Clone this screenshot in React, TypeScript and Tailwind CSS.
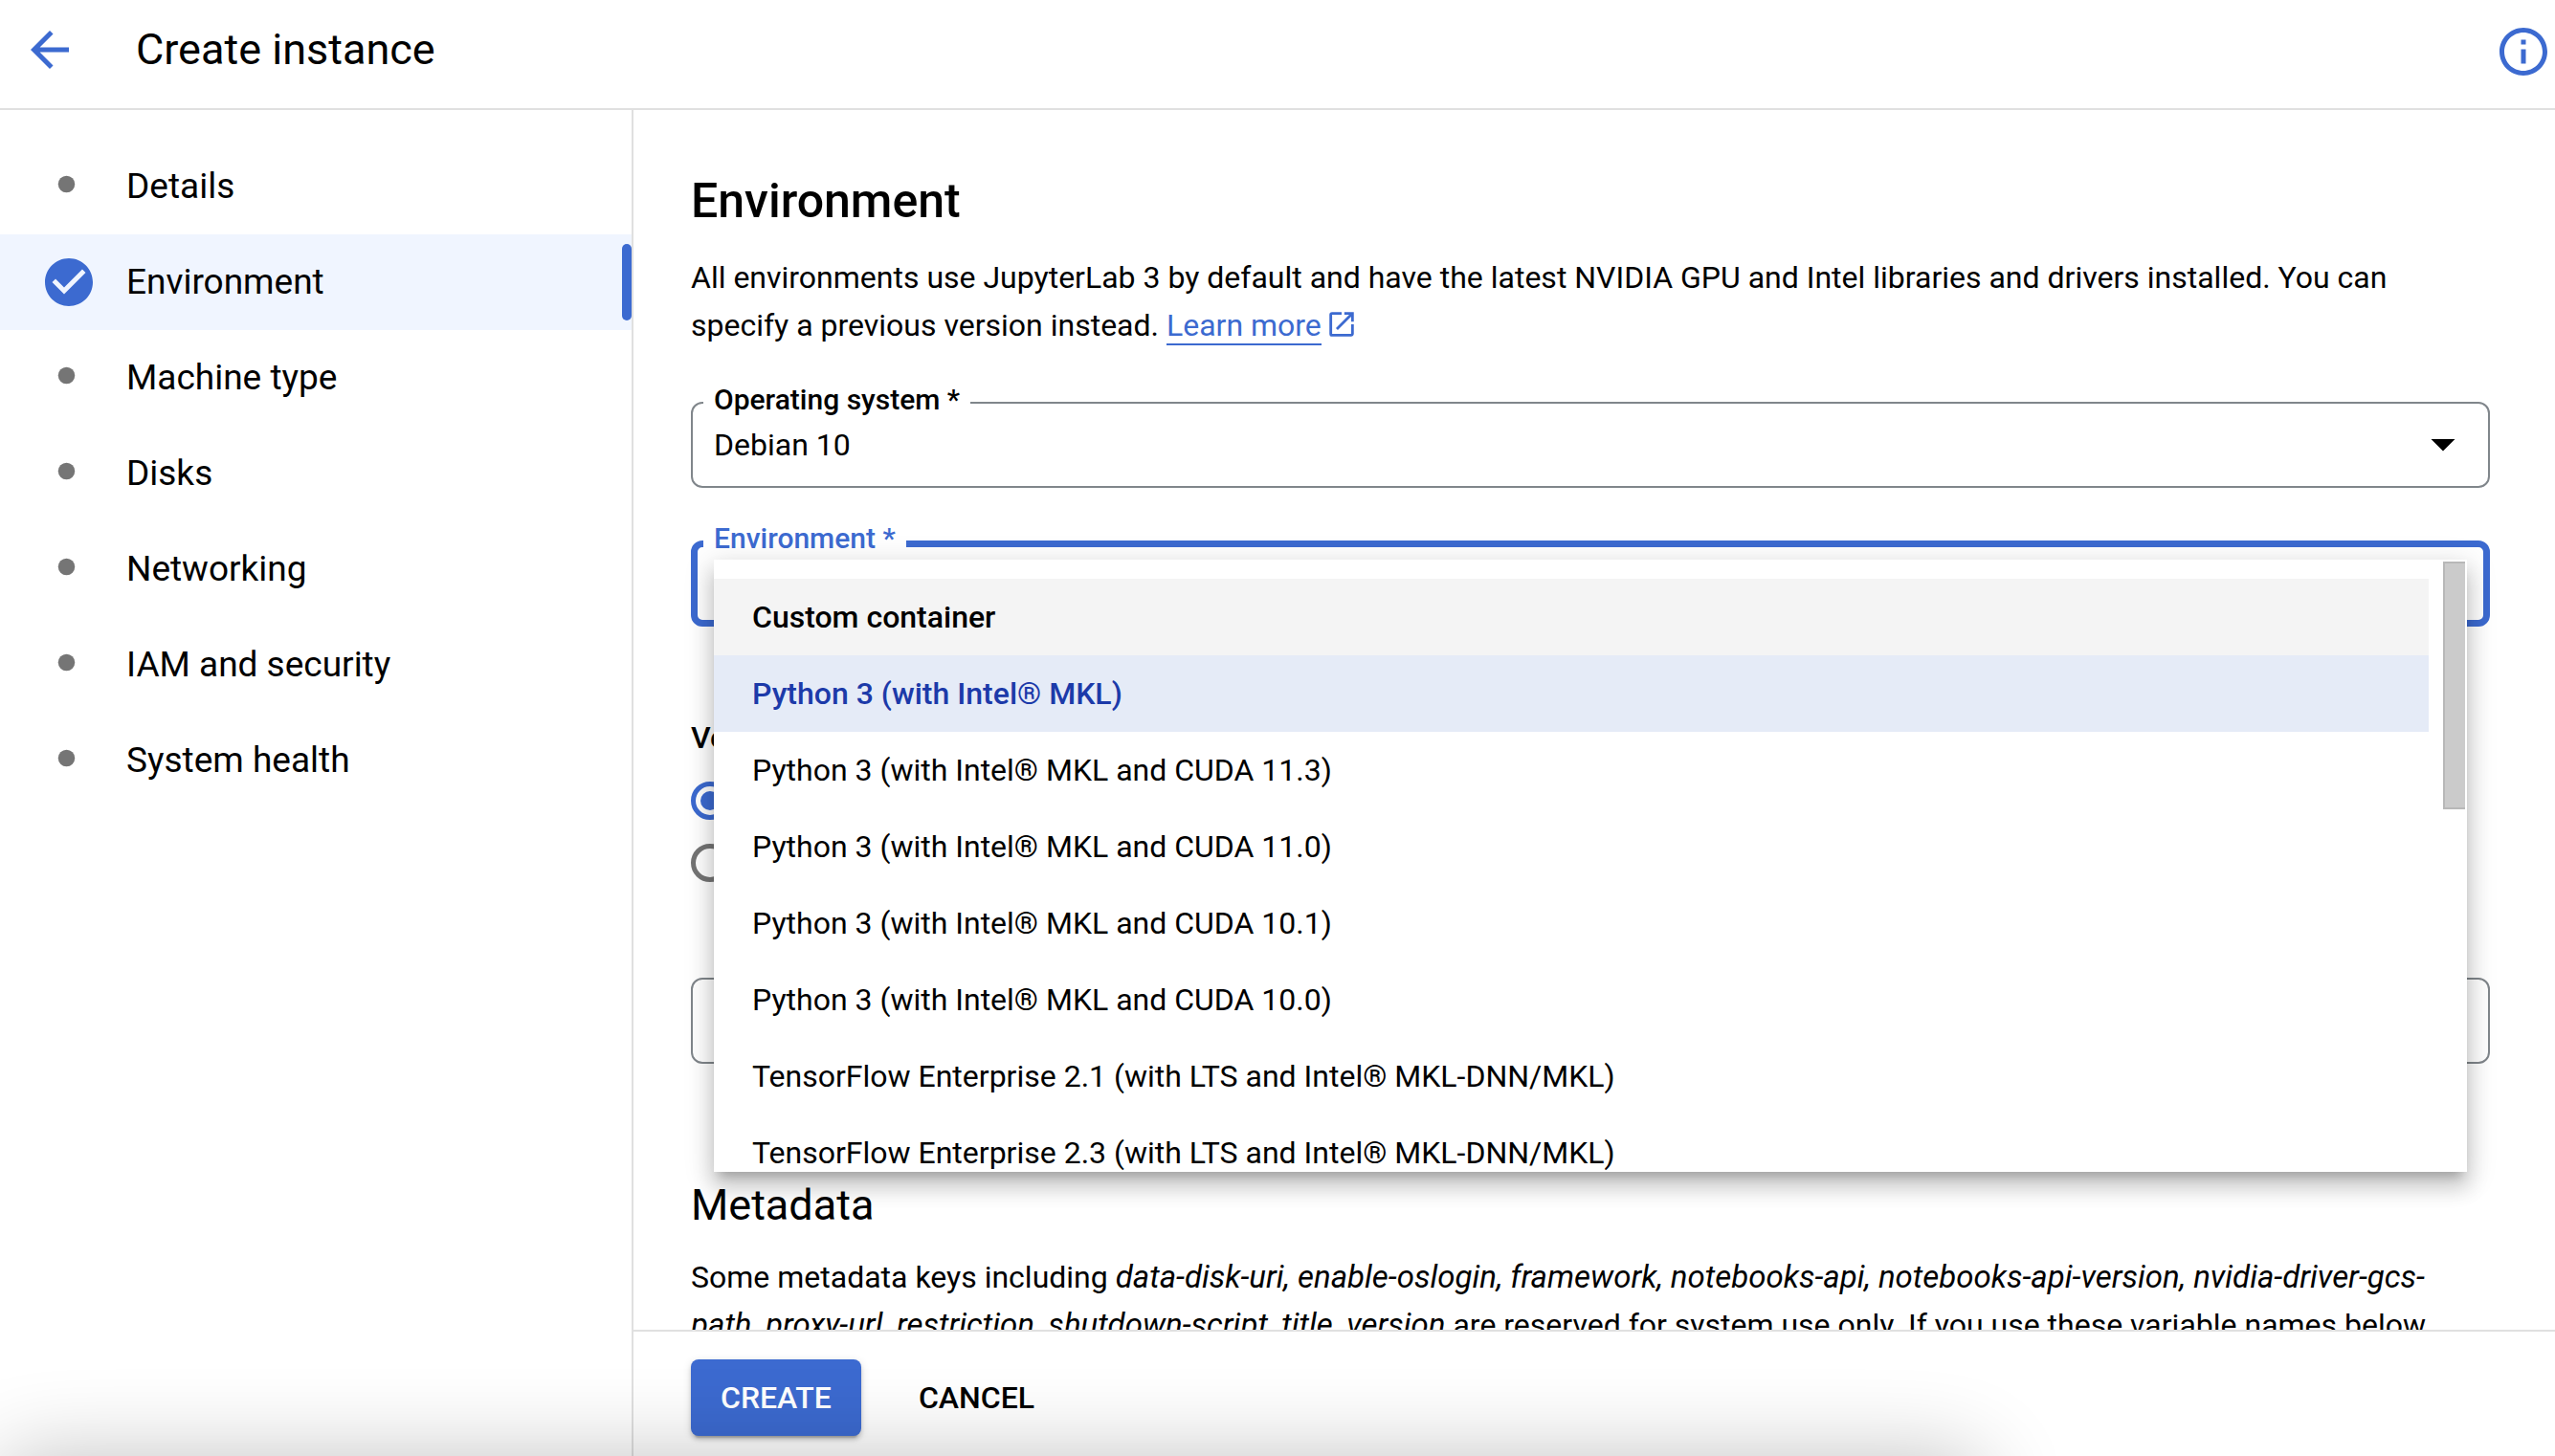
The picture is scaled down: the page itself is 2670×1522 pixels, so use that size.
import type { ReactNode } from "react";

const steps = [
  "Details",
  "Environment",
  "Machine type",
  "Disks",
  "Networking",
  "IAM and security",
  "System health",
];

const environments = [
  "Custom container",
  "Python 3 (with Intel® MKL)",
  "Python 3 (with Intel® MKL and CUDA 11.3)",
  "Python 3 (with Intel® MKL and CUDA 11.0)",
  "Python 3 (with Intel® MKL and CUDA 10.1)",
  "Python 3 (with Intel® MKL and CUDA 10.0)",
  "TensorFlow Enterprise 2.1 (with LTS and Intel® MKL-DNN/MKL)",
  "TensorFlow Enterprise 2.3 (with LTS and Intel® MKL-DNN/MKL)",
];

function Icon({ className, children }: { className: string; children: ReactNode }) {
  return (
    <svg viewBox="0 0 24 24" fill="currentColor" aria-hidden="true" className={className}>
      {children}
    </svg>
  );
}

function Header() {
  return (
    <header className="flex shrink-0 items-center border-b-2 border-[#e0e0e0] pb-[9px] pr-[3px] pl-[22px]">
      <button type="button" aria-label="Back" className="text-[#3c6ad0]">
        <Icon className="size-[60px]">
          <path d="M20 11H7.83l5.59-5.59L12 4l-8 8 8 8 1.41-1.41L7.83 13H20v-2z" />
        </Icon>
      </button>
      <h1 className="ml-[60px] flex-1 text-[45px] leading-[104px]">Create instance</h1>
      <button type="button" aria-label="Information" className="mt-1 text-[#3c6ad0]">
        <Icon className="size-[60px]">
          <path d="M11 7h2v2h-2zm0 4h2v6h-2zm1-9C6.48 2 2 6.48 2 12s4.48 10 10 10 10-4.48 10-10S17.52 2 12 2zm0 18c-4.41 0-8-3.59-8-8s3.59-8 8-8 8 3.59 8 8-3.59 8-8 8z" />
        </Icon>
      </button>
    </header>
  );
}

function Sidebar() {
  return (
    <nav aria-label="Steps" className="w-[662px] shrink-0 border-r-2 border-[#e0e0e0] pt-[30px]">
      {steps.map((step) => {
        const active = step === "Environment";
        return (
          <a
            key={step}
            href="#"
            aria-current={active ? "step" : undefined}
            className={
              active
                ? "flex h-[100px] items-center bg-[#f0f5ff] pl-[42px]"
                : "flex h-[100px] items-center pl-[42px]"
            }
          >
            {active ? (
              <Icon className="size-[60px] text-[#3c6ad0]">
                <path d="M12 2C6.48 2 2 6.48 2 12s4.48 10 10 10 10-4.48 10-10S17.52 2 12 2zm-2 15l-5-5 1.41-1.41L10 14.17l7.59-7.59L19 8l-9 9z" />
              </Icon>
            ) : (
              <Icon className="size-[60px] text-[#757575]">
                <circle cx="11" cy="11" r="3.5" />
              </Icon>
            )}
            <span className="ml-[30px] flex-1 text-[37px] leading-[44px]">{step}</span>
            {active && <span className="h-20 w-[10px] rounded-[5px] bg-[#3c6ad0]" />}
          </a>
        );
      })}
    </nav>
  );
}

function EnvironmentMenu() {
  return (
    <div className="absolute inset-x-6 top-5 z-10 h-[640px] overflow-hidden bg-white shadow-[0_10px_10px_-6px_rgba(0,0,0,0.2),0_16px_20px_2px_rgba(0,0,0,0.14),0_6px_28px_4px_rgba(0,0,0,0.12)]">
      <div className="flex items-start justify-between">
        <div role="listbox" aria-label="Environment" className="mt-5 mr-[15px] flex-1">
          {environments.map((name, i) => (
            <button
              key={name}
              type="button"
              role="option"
              aria-selected={i === 1}
              className={
                i === 0
                  ? "block h-20 w-full bg-[#f4f4f4] pl-10 text-left text-[32px] font-medium"
                  : i === 1
                    ? "block h-20 w-full bg-[#e5ebf7] pl-10 text-left text-[32px] font-medium text-[#1c3aa9]"
                    : "block h-20 w-full pl-10 text-left text-[32px]"
              }
            >
              {name}
            </button>
          ))}
        </div>
        <div className="mt-[2px] mr-[2px] h-[259px] w-[23px] border-2 border-r-0 border-[#b8b8b8] bg-[#cbcbcb]" />
      </div>
    </div>
  );
}

function Content() {
  return (
    <main className="min-h-0 flex-1 overflow-hidden pt-[65px] pr-[68px] pl-[60px]">
      <h2 className="text-[50px] leading-[60px] font-medium">Environment</h2>
      <p className="mt-[25px] text-[32px] leading-[50px]">
        All environments use JupyterLab 3 by default and have the latest NVIDIA GPU and Intel
        libraries and drivers installed. You can specify a previous version instead.{" "}
        <a href="#" className="text-[#3c6ad0]">
          <span className="border-b-2 border-[#3c6ad0]">Learn more</span>
          <Icon className="ml-1 inline size-[34px] align-[-5px]">
            <path d="M19 19H5V5h7V3H5a2 2 0 0 0-2 2v14a2 2 0 0 0 2 2h14c1.1 0 2-.9 2-2v-7h-2v7zM14 3v2h3.59l-9.83 9.83 1.41 1.41L19 6.41V10h2V3h-7z" />
          </Icon>
        </a>
      </p>

      <div className="relative mt-[55px]">
        <label
          htmlFor="os"
          className="absolute -top-5 left-[13px] bg-white px-[11px] text-[30px] leading-9 font-medium"
        >
          Operating system *
        </label>
        <select
          id="os"
          className="block h-[90px] w-full appearance-none rounded-xl border-2 border-[#80868b] bg-transparent px-[22px] text-[32px]"
        >
          <option>Debian 10</option>
        </select>
        <Icon className="pointer-events-none absolute top-[14px] right-[19px] size-[60px]">
          <path d="M7 10l5 5 5-5z" />
        </Icon>
      </div>

      <div className="relative mt-[55px]">
        <label
          htmlFor="environment"
          className="absolute -top-5 left-[13px] bg-white px-[11px] text-[30px] leading-9 font-medium text-[#3c6ad0]"
        >
          Environment *
        </label>
        <select
          id="environment"
          className="block h-[90px] w-full appearance-none rounded-xl border-[7px] border-[#3c6ad0] bg-transparent"
        />
        <EnvironmentMenu />
      </div>

      <fieldset className="mt-24">
        <legend className="text-[32px] leading-10 font-medium">Version</legend>
        <div className="mt-[26px] flex flex-col gap-[25px]">
          <input
            type="radio"
            name="version"
            defaultChecked
            aria-label="Latest version"
            className="size-10 appearance-none rounded-full border-[5px] border-[#757575] checked:border-[#3c6ad0] checked:bg-[#3c6ad0] checked:bg-clip-content checked:p-[5px]"
          />
          <input
            type="radio"
            name="version"
            aria-label="Previous version"
            className="size-10 appearance-none rounded-full border-[5px] border-[#757575] checked:border-[#3c6ad0]"
          />
        </div>
      </fieldset>

      <select
        aria-label="Version"
        className="mt-[100px] block h-[90px] w-full appearance-none rounded-xl border-2 border-[#80868b] bg-transparent"
      />

      <h3 className="mt-[118px] text-[45px] leading-[60px]">Metadata</h3>
      <p className="mt-5 text-[32px] leading-[50px]">
        Some metadata keys including{" "}
        <em className="text-[33px]">
          data-disk-uri, enable-oslogin, framework, notebooks-api, notebooks-api-version,
          nvidia-driver-gcs-
          <br />
          path, proxy-url, restriction, shutdown-script, title, version
        </em>{" "}
        are reserved for system use only. If you use these variable names below,
      </p>
    </main>
  );
}

function Footer() {
  return (
    <footer className="flex shrink-0 items-center gap-6 border-t-2 border-[#e0e0e0] pt-[29px] pb-[21px] pl-[60px] text-[32px] font-medium">
      <button
        type="button"
        className="h-20 rounded-lg bg-[#3c6ad0] px-[31px] text-white shadow-[0_6px_2px_-4px_rgba(0,0,0,0.2),0_4px_4px_rgba(0,0,0,0.14),0_2px_10px_rgba(0,0,0,0.12)]"
      >
        CREATE
      </button>
      <button type="button" className="h-20 px-9">
        CANCEL
      </button>
    </footer>
  );
}

export default function App() {
  return (
    <div className="relative flex h-screen flex-col overflow-hidden bg-white font-[Roboto,sans-serif] text-black">
      <Header />
      <div className="flex min-h-0 flex-1">
        <Sidebar />
        <div className="flex min-w-0 flex-1 flex-col">
          <Content />
          <Footer />
        </div>
      </div>
      <div className="pointer-events-none absolute top-full right-[600px] left-0 z-20 h-40 rounded-3xl shadow-[0_0_90px_rgba(0,0,0,0.24)]" />
    </div>
  );
}
